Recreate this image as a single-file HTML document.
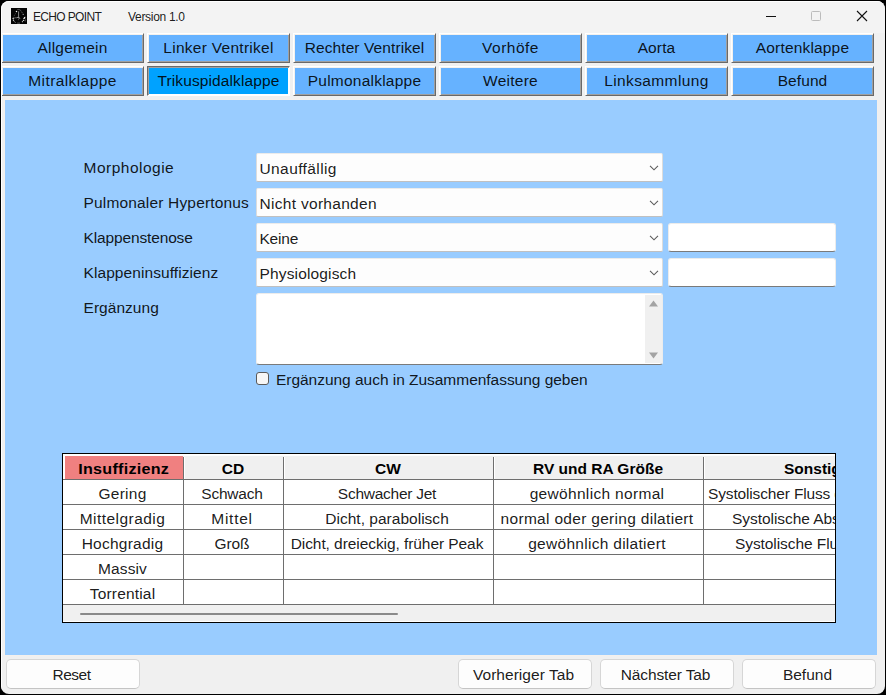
<!DOCTYPE html>
<html lang="de">
<head>
<meta charset="utf-8">
<title>ECHO POINT</title>
<style>
*{box-sizing:border-box;margin:0;padding:0}
html,body{width:886px;height:695px;overflow:hidden;background:#000}
body{position:relative;font-family:"Liberation Sans",sans-serif;font-size:15.5px;color:rgba(0,0,0,.9)}
.win{position:absolute;left:1px;top:1px;width:884px;height:693px;background:#f0f0f0;border-radius:8px;overflow:hidden}
.win:after{content:"";position:absolute;left:0;top:0;width:884px;height:693px;border:1px solid #fff;border-radius:8px;pointer-events:none}
.titlebar{position:absolute;left:0;top:0;width:884px;height:32px;background:#f3f3f3}
.abs{position:absolute}
.t{position:absolute;white-space:nowrap;line-height:20px;height:20px}
.title{font-size:12px;top:6px}
/* tabs */
.tab{position:absolute;width:143px;height:30px;background:#66b2ff;border:1px solid;border-color:#fff #696969 #696969 #fff;box-shadow:inset 1px 1px 0 #f4f1ed,inset -1px -1px 0 #a0a0a0;text-align:center;line-height:28px;white-space:nowrap}
.tab.sel{background:#00a2ff;border-color:#696969 #fff #fff #696969;box-shadow:inset 1px 1px 0 #a0a0a0,inset -1px -1px 0 #fff}
.r1{top:32px}.r2{top:65px}
.c1{left:0}.c2{left:146px}.c3{left:292px}.c4{left:438px}.c5{left:584px}.c6{left:730px}
/* panel */
.panel{position:absolute;left:4px;top:99px;width:872px;height:555px;background:#99ccff;box-shadow:0 0 0 1px #f4f0ed}
.lbl{left:78.5px}
.combo{position:absolute;left:251px;width:407px;height:29px;background:#fdfdfd;border:1px solid #dcdcdc;border-top-color:#ebebeb;border-bottom-color:#c0c0c0;border-radius:2px;line-height:29px;padding-left:2.5px;white-space:nowrap}
.combo svg{position:absolute;right:3px;top:11px}
.entry{position:absolute;left:663px;width:168px;height:29px;background:#fff;border:1px solid #ececec;border-bottom:1px solid #7a7a7a;border-radius:3px}
.ta{position:absolute;left:251px;top:193px;width:407px;height:72px;background:#fff;border:1px solid #ececec;border-bottom-color:#7a7a7a;border-radius:3px}
.sb{position:absolute;right:0px;top:1px;width:17px;height:68px;background:#f0f0f0}
.chk{position:absolute;left:251px;top:272px;width:13px;height:13px;background:#f6f6f6;border:1px solid #5a5a5a;border-radius:3px}
/* table */
.tbl{position:absolute;left:57px;top:353px;width:774px;height:170px;border:1px solid #000;background:#fff;overflow:hidden}
.hd{position:absolute;left:0;top:0;width:772px;height:25px;background:#f0f0f0;border:2px solid #fff;border-bottom:0;border-right:0}
.th{color:#000;position:absolute;top:4px;height:22px;font-weight:bold;text-align:center;line-height:22px;white-space:nowrap}
.vw{position:absolute;top:3px;width:1px;height:22px;background:#fff}
.vl{position:absolute;width:1px;background:#6e6e6e}
.hl{position:absolute;height:1px;left:0;width:772px;background:#6e6e6e}
.td{position:absolute;height:24px;line-height:27px;text-align:center;white-space:nowrap;overflow:hidden}
.hsb{position:absolute;left:0;top:151px;width:772px;height:16px;background:#f0f0f0}
.thumb{position:absolute;left:17px;top:8px;width:318px;height:2px;background:#8a8a8a;border-radius:1px}
/* bottom buttons */
.btn{position:absolute;top:658px;width:134px;height:30px;background:#fdfdfd;border:1px solid #d6d6d6;border-bottom-color:#c4c4c4;border-radius:5px;text-align:center;line-height:30px;padding-right:3px;white-space:nowrap}
</style>
<style>
/*LS*/
#a1{letter-spacing:0.26px}
#a2{letter-spacing:0.45px}
#a3{letter-spacing:0.24px}
#a4{letter-spacing:0.10px}
#a5{letter-spacing:0.18px}
#b1{letter-spacing:-0.21px}
#b2{letter-spacing:0.74px}
#b3{letter-spacing:-0.12px}
#bt1{letter-spacing:-0.51px}
#bt2{letter-spacing:0.04px}
#bt3{letter-spacing:-0.12px}
#bt4{letter-spacing:0.02px}
#c1{letter-spacing:0.40px}
#c2{letter-spacing:0.30px}
#c3{letter-spacing:-0.22px}
#c4{letter-spacing:0.15px}
#ck{letter-spacing:-0.03px}
#d1{letter-spacing:-0.26px}
#d2{letter-spacing:0.02px}
#d3{letter-spacing:-0.07px}
#e1{letter-spacing:0.32px}
#e2{letter-spacing:0.30px}
#e3{letter-spacing:0.29px}
#f1{letter-spacing:-0.15px}
#f2{letter-spacing:-0.05px}
#f3{letter-spacing:-0.08px}
#h1{letter-spacing:0.25px}
#l1{letter-spacing:0.49px}
#l2{letter-spacing:0.17px}
#l3{letter-spacing:-0.14px}
#l4{letter-spacing:0.08px}
#l5{letter-spacing:0.04px}
#tb1{letter-spacing:0.22px}
#tb10{letter-spacing:0.24px}
#tb11{letter-spacing:0.37px}
#tb12{letter-spacing:0.08px}
#tb2{letter-spacing:0.28px}
#tb3{letter-spacing:0.09px}
#tb4{letter-spacing:0.48px}
#tb5{letter-spacing:0.13px}
#tb6{letter-spacing:0.17px}
#tb7{letter-spacing:0.41px}
#tb8{letter-spacing:0.11px}
#tb9{letter-spacing:0.23px}
#ttl1{letter-spacing:-0.66px}
#ttl2{letter-spacing:-0.31px}
/*ENDLS*/
</style>
</head>
<body>
<div class="win">
  <div class="titlebar">
    <svg class="abs" style="left:10px;top:7px" width="16" height="16" viewBox="0 0 16 16">
      <rect width="16" height="16" fill="#040404"/>
      <path d="M6.3 1.6Q7.8 1 9.5 2.2" stroke="#5a5a5a" stroke-width="0.9" fill="none"/>
      <path d="M9.6 2.4L12.4 6.5" stroke="#6a6a6a" stroke-width="0.9" fill="none" stroke-dasharray="1.2 0.9"/>
      <circle cx="12.2" cy="6.4" r="0.6" fill="#9a9a9a"/>
      <path d="M4.6 5.4L3.4 7.4L2.4 9.6" stroke="#555" stroke-width="0.9" fill="none" stroke-dasharray="1.1 0.9"/>
      <path d="M7.6 3.4V9.4" stroke="#a8a8a8" stroke-width="0.8" fill="none"/>
      <path d="M5.4 9.8L6.8 9.4L9.2 10.3" stroke="#bdbdbd" stroke-width="0.9" fill="none"/>
      <path d="M2.2 10.3L5 9.6" stroke="#6e6e6e" stroke-width="0.8" fill="none"/>
      <path d="M7.5 10.6V12.2" stroke="#5c5c5c" stroke-width="0.8" fill="none"/>
      <circle cx="5.5" cy="3.5" r="0.75" fill="#f4f4f4"/>
      <circle cx="2.1" cy="10.4" r="0.75" fill="#d8d8d8"/>
      <circle cx="2.5" cy="12.3" r="0.7" fill="#d0d0d0"/>
      <path d="M3.1 13.3L4.4 14.6" stroke="#b0b0b0" stroke-width="0.9" fill="none"/>
      <path d="M13.8 8.8Q14 10.3 12.4 10.7" stroke="#f6f6f6" stroke-width="1.3" fill="none"/>
      <path d="M14.6 10.5L14.8 13.5L13 13Z" fill="#4a4a4a"/>
      <circle cx="12.4" cy="12.4" r="0.65" fill="#d6d6d6"/>
      <circle cx="11.4" cy="13.7" r="0.6" fill="#c4c4c4"/>
      <path d="M6.2 15.1H9" stroke="#5a5a5a" stroke-width="1" fill="none"/>
    </svg>
    <div class="t title" id="ttl1" style="left:32px">ECHO POINT</div>
    <div class="t title" id="ttl2" style="left:127px">Version 1.0</div>
    <svg class="abs" style="left:764px;top:10px" width="12" height="12" viewBox="0 0 12 12"><path d="M1 5.5H11" stroke="#111" stroke-width="1"/></svg>
    <svg class="abs" style="left:809px;top:9px" width="12" height="12" viewBox="0 0 12 12"><rect x="1.5" y="1.5" width="9" height="9" rx="1" fill="none" stroke="#bcbcbc" stroke-width="1"/></svg>
    <svg class="abs" style="left:855px;top:9px" width="12" height="12" viewBox="0 0 12 12"><path d="M1 1L11 11M11 1L1 11" stroke="#111" stroke-width="1.1"/></svg>
  </div>

  <div class="tab r1 c1"><span id="tb1">Allgemein</span></div>
  <div class="tab r1 c2"><span id="tb2">Linker Ventrikel</span></div>
  <div class="tab r1 c3"><span id="tb3">Rechter Ventrikel</span></div>
  <div class="tab r1 c4"><span id="tb4">Vorhöfe</span></div>
  <div class="tab r1 c5"><span id="tb5">Aorta</span></div>
  <div class="tab r1 c6"><span id="tb6">Aortenklappe</span></div>
  <div class="tab r2 c1"><span id="tb7">Mitralklappe</span></div>
  <div class="tab r2 c2 sel"><span id="tb8">Trikuspidalklappe</span></div>
  <div class="tab r2 c3"><span id="tb9">Pulmonalklappe</span></div>
  <div class="tab r2 c4"><span id="tb10">Weitere</span></div>
  <div class="tab r2 c5"><span id="tb11">Linksammlung</span></div>
  <div class="tab r2 c6"><span id="tb12">Befund</span></div>

  <div class="panel">
    <div class="t lbl" id="l1" style="top:58px">Morphologie</div>
    <div class="t lbl" id="l2" style="top:93px">Pulmonaler Hypertonus</div>
    <div class="t lbl" id="l3" style="top:128px">Klappenstenose</div>
    <div class="t lbl" id="l4" style="top:163px">Klappeninsuffizienz</div>
    <div class="t lbl" id="l5" style="top:198px">Ergänzung</div>

    <div class="combo" style="top:53px"><span id="c1">Unauffällig</span><svg width="10" height="6" viewBox="0 0 10 6"><path d="M1 0.8L5 4.8L9 0.8" fill="none" stroke="#5c5c5c" stroke-width="1.1"/></svg></div>
    <div class="combo" style="top:88px"><span id="c2">Nicht vorhanden</span><svg width="10" height="6" viewBox="0 0 10 6"><path d="M1 0.8L5 4.8L9 0.8" fill="none" stroke="#5c5c5c" stroke-width="1.1"/></svg></div>
    <div class="combo" style="top:123px"><span id="c3">Keine</span><svg width="10" height="6" viewBox="0 0 10 6"><path d="M1 0.8L5 4.8L9 0.8" fill="none" stroke="#5c5c5c" stroke-width="1.1"/></svg></div>
    <div class="combo" style="top:158px"><span id="c4">Physiologisch</span><svg width="10" height="6" viewBox="0 0 10 6"><path d="M1 0.8L5 4.8L9 0.8" fill="none" stroke="#5c5c5c" stroke-width="1.1"/></svg></div>
    <div class="entry" style="top:123px"></div>
    <div class="entry" style="top:158px"></div>

    <div class="ta"><div class="sb">
      <svg class="abs" style="left:4px;top:5px" width="9" height="7" viewBox="0 0 9 7"><path d="M0 6.5L4.5 0.5L9 6.5Z" fill="#a3a3a3"/></svg>
      <svg class="abs" style="left:4px;top:57px" width="9" height="7" viewBox="0 0 9 7"><path d="M0 0.5L4.5 6.5L9 0.5Z" fill="#a3a3a3"/></svg>
    </div></div>
    <div class="chk"></div>
    <div class="t" id="ck" style="left:271px;top:270px">Ergänzung auch in Zusammenfassung geben</div>

    <div class="tbl">
      <div class="hd"></div>
      <div class="abs" style="left:2px;top:2px;width:118px;height:23px;background:#f08080"></div>
      <div class="th" style="left:1.5px;width:118px"><span id="h1" style="display:inline-block;transform:scaleX(1.04)">Insuffizienz</span></div>
      <div class="th" style="left:120.5px;width:99px"><span id="h2">CD</span></div>
      <div class="th" style="left:220.5px;width:209px"><span id="h3">CW</span></div>
      <div class="th" style="left:430.5px;width:209px"><span id="h4">RV und RA Größe</span></div>
      <div class="th" style="left:641px;width:300px;text-align:left;padding-left:80px"><span id="h5">Sonstiges</span></div>
      <div class="hl" style="top:25px"></div>
      <div class="hl" style="top:50px"></div>
      <div class="hl" style="top:75px"></div>
      <div class="hl" style="top:100px"></div>
      <div class="hl" style="top:125px"></div>
      <div class="hl" style="top:150px"></div>
      <div class="vl" style="left:120px;top:3px;height:148px"></div>
      <div class="vw" style="left:121px"></div>
      <div class="vl" style="left:220px;top:3px;height:148px"></div>
      <div class="vw" style="left:221px"></div>
      <div class="vl" style="left:430px;top:3px;height:148px"></div>
      <div class="vw" style="left:431px"></div>
      <div class="vl" style="left:640px;top:3px;height:148px"></div>
      <div class="vw" style="left:641px"></div>
      <div class="td" style="left:-0.5px;top:26px;width:120px"><span id="a1">Gering</span></div>
      <div class="td" style="left:-0.5px;top:51px;width:120px"><span id="a2">Mittelgradig</span></div>
      <div class="td" style="left:-0.5px;top:76px;width:120px"><span id="a3">Hochgradig</span></div>
      <div class="td" style="left:-0.5px;top:101px;width:120px"><span id="a4">Massiv</span></div>
      <div class="td" style="left:-0.5px;top:126px;width:120px"><span id="a5">Torrential</span></div>
      <div class="td" style="left:119.5px;top:26px;width:99px"><span id="b1">Schwach</span></div>
      <div class="td" style="left:119.5px;top:51px;width:99px"><span id="b2">Mittel</span></div>
      <div class="td" style="left:119.5px;top:76px;width:99px"><span id="b3">Groß</span></div>
      <div class="td" style="left:219.5px;top:26px;width:209px"><span id="d1">Schwacher Jet</span></div>
      <div class="td" style="left:219.5px;top:51px;width:209px"><span id="d2">Dicht, parabolisch</span></div>
      <div class="td" style="left:219.5px;top:76px;width:209px"><span id="d3">Dicht, dreieckig, früher Peak</span></div>
      <div class="td" style="left:429.5px;top:26px;width:209px"><span id="e1">gewöhnlich normal</span></div>
      <div class="td" style="left:429.5px;top:51px;width:209px"><span id="e2">normal oder gering dilatiert</span></div>
      <div class="td" style="left:429.5px;top:76px;width:209px"><span id="e3">gewöhnlich dilatiert</span></div>
      <div class="td" style="left:645px;top:26px;width:127px;text-align:left"><span id="f1">Systolischer Fluss dominant</span></div>
      <div class="td" style="left:669px;top:51px;width:103px;text-align:left"><span id="f2">Systolische Abschwächung</span></div>
      <div class="td" style="left:672px;top:76px;width:100px;text-align:left"><span id="f3">Systolische Flussumkehr</span></div>
      <div class="hsb"><div class="thumb"></div></div>
    </div>
  </div>

  <div class="btn" style="left:5px"><span id="bt1">Reset</span></div>
  <div class="btn" style="left:457px"><span id="bt2">Vorheriger Tab</span></div>
  <div class="btn" style="left:599px"><span id="bt3">Nächster Tab</span></div>
  <div class="btn" style="left:741px"><span id="bt4">Befund</span></div>
</div>
</body>
</html>
